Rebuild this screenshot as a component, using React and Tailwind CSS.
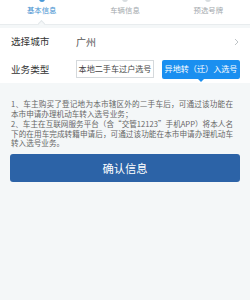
import React from 'react';

const font = { fontFamily: '"Noto Sans CJK SC", "Noto Sans", sans-serif' };

const Tab = ({ label, active }) => (
    <div className="relative flex-1 flex flex-col items-center">
        <span className={`absolute -top-[8px] w-[6px] h-[6px] rounded-full ${active ? 'bg-[#4a9ad8]' : 'bg-[#d8dde0]'}`} />
        <span className={`text-[7.4px] leading-[12px] ${active ? 'text-[#3f8fcf]' : 'text-[#a3a9ad]'}`}>{label}</span>
        {active && (
            <span className="absolute top-[17px] w-[5px] h-[5px] rotate-45 bg-[#f4f7f8] border-l border-t border-[#e3e8ea]" />
        )}
    </div>
);

const App = () => {
    return (
        <div className="w-[250px] h-[300px] bg-[#f4f7f8] overflow-hidden" style={font}>
            <div className="flex h-[25px] bg-white border-b border-[#e8ecee] pt-[4px]">
                <Tab label="基本信息" active />
                <Tab label="车辆信息" />
                <Tab label="预选号牌" />
            </div>

            <div className="mt-[3px] bg-white">
                <div className="flex items-center h-[27px] pl-[11px] pr-[10px]">
                    <span className="w-[65px] text-[9.6px] text-[#333]">选择城市</span>
                    <span className="flex-1 text-[10px] text-[#555]">广州</span>
                    <svg width="5" height="8" viewBox="0 0 5 8" className="mr-[1px]">
                        <path d="M1 1 L4 4 L1 7" fill="none" stroke="#bfc4c7" strokeWidth="1" />
                    </svg>
                </div>
                <div className="flex items-center h-[28px] pl-[11px]">
                    <span className="w-[65px] text-[9.6px] text-[#333]">业务类型</span>
                    <div className="w-[78px] h-[18px] border border-[#d5d9dc] flex items-center justify-center text-[8.1px] text-[#444] whitespace-nowrap overflow-hidden">
                        本地二手车过户选号
                    </div>
                    <div className="relative ml-[8px] w-[78px] h-[19px] bg-[#1a8ff0] rounded-[2px] flex items-center justify-center text-[8.1px] text-white whitespace-nowrap">
                        异地转（迁）入选号
                        <span className="absolute -bottom-[3px] left-[36px] w-0 h-0 border-l-[3px] border-r-[3px] border-t-[3px] border-l-transparent border-r-transparent border-t-[#1a8ff0]" />
                    </div>
                </div>
            </div>

            <div className="ml-[11px] w-[222px] pt-[16px] text-[7.6px] leading-[9.6px] text-[#666] whitespace-nowrap">
                <p className="[text-align-last:justify]">1、车主购买了登记地为本市辖区外的二手车后，可通过该功能在</p>
                <p>本市申请办理机动车转入选号业务；</p>
                <p className="mt-[1px] [text-align-last:justify]">2、车主在互联网服务平台（含“交管12123”手机APP）将本人名</p>
                <p className="[text-align-last:justify]">下的在用车完成转籍申请后，可通过该功能在本市申请办理机动车</p>
                <p>转入选号业务。</p>
            </div>

            <div className="px-[10px] mt-[6px]">
                <button className="w-full h-[28px] rounded-[3px] bg-[#2c63a7] text-white text-[11.3px] flex items-center justify-center">
                    确认信息
                </button>
            </div>
        </div>
    );
};

export default App;
